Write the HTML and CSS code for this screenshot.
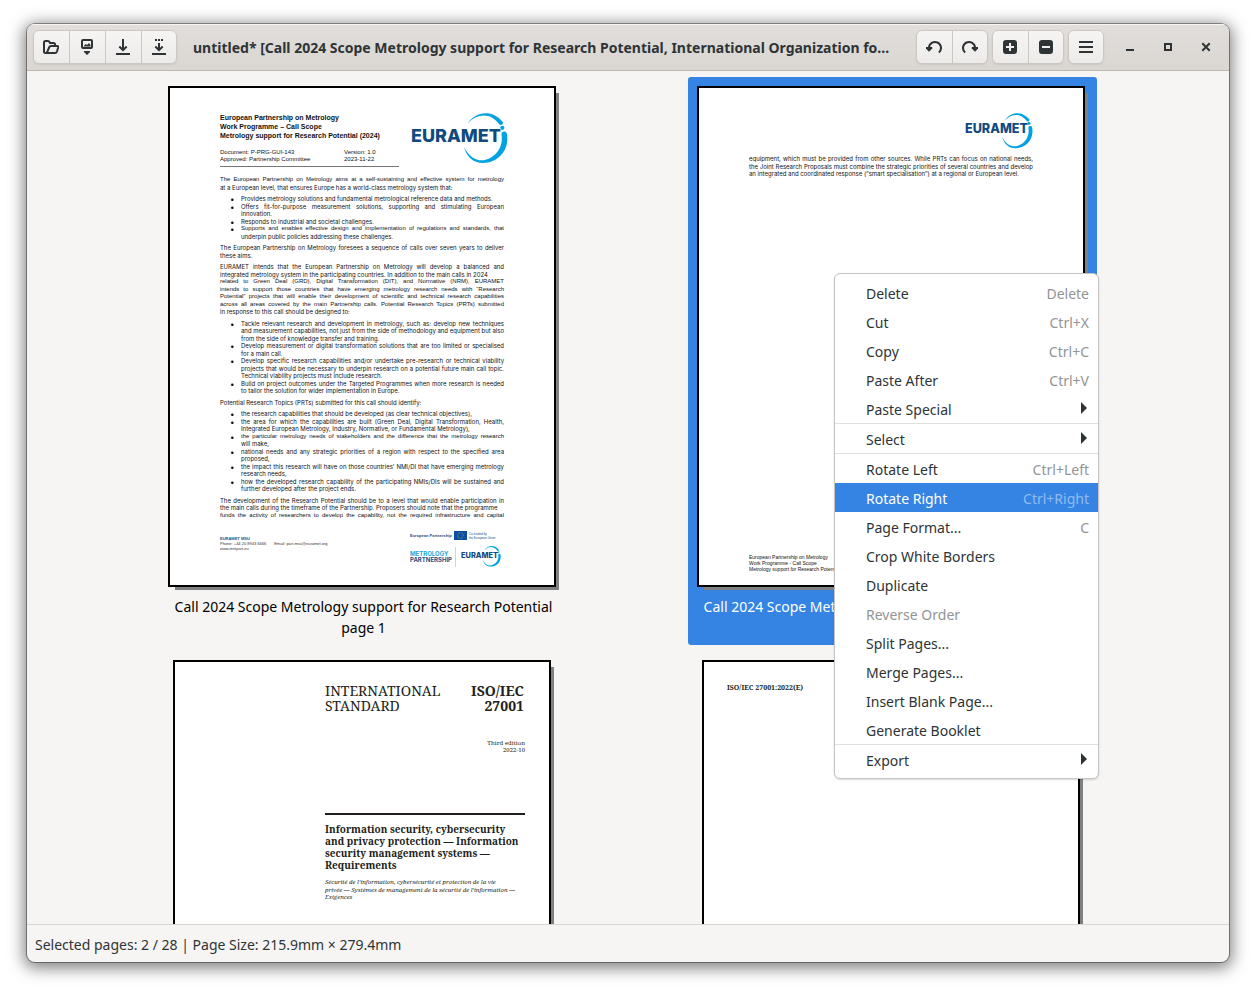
FILE: index.html
```html
<!DOCTYPE html>
<html lang="en">
<head>
<meta charset="utf-8">
<title>PDF Arranger</title>
<link rel="stylesheet" href="styles.css">
</head>
<body>
<svg class="defs" aria-hidden="true">
  <symbol id="euramet" viewBox="0 0 97 51">
    <text class="logo-text" x="0" y="29">EURAMET</text>
    <path fill="#00a3e0" d="M56.7 10.7C64-1.500 81-4 91.300 8.500A2 2 0 0 1 88.200 11.300C80-.500 66 0 56.700 10.700ZM90.500 21.500C90 18 95 17.500 95.800 20.500C99 37 87 50 72 50C62 50 55.500 43.500 53 34C60 48 71 50 80 44.500C88 39.500 92 31 90.500 21.500Z"/>
    <circle cx="91.300" cy="14.800" r="2.100" fill="#00a3e0"/>
  </symbol>
</svg>
<div class="window">
  <header class="titlebar">
    <div class="group">
      <button class="tool" aria-label="Open"><svg viewBox="0 0 16 16"><path class="line" d="M3.500 14H2.500Q1 14 1 12.500V3.500Q1 2 2.500 2H5Q6 2 6.500 3L7 4H10.500Q12 4 12 5.500V6M3.800 14L6.300 8Q6.800 7 8 7H14Q15.500 7 15.200 8.200L14 12.500Q13.500 14 12 14Z"/></svg></button>
      <button class="tool" aria-label="Import"><svg viewBox="0 0 16 16"><rect class="line" x="3" y="1" width="10" height="8" rx="1"/><path d="M4.500 7.500L6.500 5L8 6L10 4L11.500 6V7.500ZM5 12H11V13L8 16L5 13Z"/></svg></button>
      <button class="tool" aria-label="Save"><svg viewBox="0 0 16 16"><path class="line" d="M8 0V11M4.300 7.500L8 11.200L11.700 7.500M1 15H15"/></svg></button>
      <button class="tool" aria-label="Save as"><svg viewBox="0 0 16 16"><path class="line" d="M8 4V11M4.300 7.500L8 11.200L11.700 7.500M1 15H15M4 1H6M7 1H9M10 1H12"/></svg></button>
    </div>
    <h1 class="title">untitled* [Call 2024 Scope Metrology support for Research Potential, International Organization fo…</h1>
    <div class="group">
      <button class="tool" aria-label="Rotate left"><svg viewBox="0 0 16 16"><path class="line" d="M3 9A6 6 0 1 1 12.900 13.500"/><path d="M0 8H6.200V9.500L3 12.700L0 9.500Z"/></svg></button>
      <button class="tool" aria-label="Rotate right"><svg viewBox="0 0 16 16"><path class="line" d="M13 9A6 6 0 1 0 3.100 13.500"/><path d="M16 8H9.800V9.500L13 12.700L16 9.500Z"/></svg></button>
    </div>
    <div class="group">
      <button class="tool" aria-label="Zoom in"><svg viewBox="0 0 16 16"><path fill-rule="evenodd" d="M4 1H12Q15 1 15 4V12Q15 15 12 15H4Q1 15 1 12V4Q1 1 4 1ZM7 4V7H4V9H7V12H9V9H12V7H9V4Z"/></svg></button>
      <button class="tool" aria-label="Zoom out"><svg viewBox="0 0 16 16"><path fill-rule="evenodd" d="M4 1H12Q15 1 15 4V12Q15 15 12 15H4Q1 15 1 12V4Q1 1 4 1ZM4 7V9H12V7Z"/></svg></button>
    </div>
    <div class="group">
      <button class="tool" aria-label="Menu"><svg viewBox="0 0 16 16"><path d="M1 2H15V4H1ZM1 7H15V9H1ZM1 12H15V14H1Z"/></svg></button>
    </div>
    <div class="controls">
      <button class="control" aria-label="Minimize"><svg viewBox="0 0 16 16"><path d="M4 10H12V12H4Z"/></svg></button>
      <button class="control" aria-label="Maximize"><svg viewBox="0 0 16 16"><rect class="line" x="5" y="5" width="6" height="6"/></svg></button>
      <button class="control" aria-label="Close"><svg viewBox="0 0 16 16"><path class="line" d="M4.300 4.300L11.700 11.700M11.700 4.300L4.300 11.700"/></svg></button>
    </div>
  </header>

  <main class="canvas">
    <section class="item">
      <article class="page report">
        <div class="head">
          <div class="head-text">
            <h2>European Partnership on Metrology<br>Work Programme – Call Scope<br>Metrology support for Research Potential (2024)</h2>
            <div class="meta">
              <p>Document: P-PRG-GUI-143<br>Approved: Partnership Committee</p>
              <p>Version: 1.0<br>2023-11-22</p>
            </div>
          </div>
          <svg class="logo" role="img" aria-label="EURAMET"><use href="#euramet"/></svg>
        </div>
        <p><span class="tight">The European Partnership on Metrology aims at a self-sustaining and effective system for metrology</span> at a European level, that ensures Europe has a world-class metrology system that:</p>
        <ul>
          <li>Provides metrology solutions and fundamental metrological reference data and methods.</li>
          <li>Offers fit-for-purpose measurement solutions, supporting and stimulating European innovation.</li>
          <li>Responds to industrial and societal challenges.</li>
          <li><span class="tight">Supports and enables effective design and implementation of regulations and standards, that</span> underpin public policies addressing these challenges.</li>
        </ul>
        <p>The European Partnership on Metrology foresees a sequence of calls over seven years to deliver these aims.</p>
        <p>EURAMET intends that the European Partnership on Metrology will develop a balanced and integrated metrology system in the participating countries. In addition to the main calls in 2024 <span class="tight">related to Green Deal (GRD), Digital Transformation (DIT), and Normative (NRM), EURAMET</span> <span class="tight">intends to support those countries that have emerging metrology research needs with “Research</span> <span class="tight">Potential” projects that will enable their development of scientific and technical research capabilities</span> <span class="tight">across all areas covered by the main Partnership calls. Potential Research Topics (PRTs) submitted</span> in response to this call should be designed to:</p>
        <ul>
          <li>Tackle relevant research and development in metrology, such as: develop new techniques and measurement capabilities, not just from the side of methodology and equipment but also from the side of knowledge transfer and training.</li>
          <li>Develop measurement or digital transformation solutions that are too limited or specialised for a main call.</li>
          <li>Develop specific research capabilities and/or undertake pre-research or technical viability projects that would be necessary to underpin research on a potential future main call topic. Technical viability projects must include research.</li>
          <li>Build on project outcomes under the Targeted Programmes when more research is needed to tailor the solution for wider implementation in Europe.</li>
        </ul>
        <p>Potential Research Topics (PRTs) submitted for this call should identify:</p>
        <ul>
          <li>the research capabilities that should be developed (as clear technical objectives),</li>
          <li>the area for which the capabilities are built (Green Deal, Digital Transformation, Health, Integrated European Metrology, Industry, Normative, or Fundamental Metrology),</li>
          <li><span class="tight">the particular metrology needs of stakeholders and the difference that the metrology research</span> will make,</li>
          <li>national needs and any strategic priorities of a region with respect to the specified area proposed,</li>
          <li>the impact this research will have on those countries’ NMI/DI that have emerging metrology research needs,</li>
          <li>how the developed research capability of the participating NMIs/DIs will be sustained and further developed after the project ends.</li>
        </ul>
        <p>The development of the Research Potential should be to a level that would enable participation in the main calls during the timeframe of the Partnership. Proposers should note that the programme <span class="tight">funds the activity of researchers to develop the capability, not the required infrastructure and capital</span></p>
        <footer class="foot">
          <div class="contact">
            <b>EURAMET MSU</b>
            <div class="contact-row"><span>Phone: +44 20 8943 6666</span><span>Email: part.msu@euramet.org</span></div>
            <span>www.metpart.eu</span>
          </div>
          <div class="brands">
            <div class="funding">
              <b>European Partnership</b>
              <svg class="flag" viewBox="0 0 13 9"><path fill="#0b4ea2" d="M0 0H13V9H0Z"/><circle cx="6.500" cy="4.500" r="2.800" fill="none" stroke="#b9b95a" stroke-width=".8" stroke-dasharray=".7 .76"/></svg>
              <span>Co-funded by<br>the European Union</span>
            </div>
            <div class="partner">
              <b><i>METROLOGY</i><br>PARTNERSHIP</b>
              <svg class="logo" role="img" aria-label="EURAMET"><use href="#euramet"/></svg>
            </div>
          </div>
        </footer>
      </article>
      <p class="caption">Call 2024 Scope Metrology support for Research Potential<br>page 1</p>
    </section>

    <section class="item selected">
      <article class="page report second">
        <svg class="logo" role="img" aria-label="EURAMET"><use href="#euramet"/></svg>
        <p>equipment, which must be provided from other sources. While PRTs can focus on national needs, the Joint Research Proposals must combine the strategic priorities of several countries and develop an integrated and coordinated response (“smart specialisation”) at a regional or European level.</p>
        <footer class="note">European Partnership on Metrology<br>Work Programme - Call Scope<br>Metrology support for Research Potential</footer>
      </article>
      <p class="caption">Call 2024 Scope Metrology support for Research Potential<br>page 2</p>
      <div class="menu" role="menu">
        <button role="menuitem"><span>Delete</span><kbd>Delete</kbd></button>
        <button role="menuitem"><span>Cut</span><kbd>Ctrl+X</kbd></button>
        <button role="menuitem"><span>Copy</span><kbd>Ctrl+C</kbd></button>
        <button role="menuitem"><span>Paste After</span><kbd>Ctrl+V</kbd></button>
        <button role="menuitem" class="sub"><span>Paste Special</span></button>
        <hr>
        <button role="menuitem" class="sub"><span>Select</span></button>
        <hr>
        <button role="menuitem"><span>Rotate Left</span><kbd>Ctrl+Left</kbd></button>
        <button role="menuitem" class="active"><span>Rotate Right</span><kbd>Ctrl+Right</kbd></button>
        <button role="menuitem"><span>Page Format...</span><kbd>C</kbd></button>
        <button role="menuitem"><span>Crop White Borders</span></button>
        <button role="menuitem"><span>Duplicate</span></button>
        <button role="menuitem" disabled><span>Reverse Order</span></button>
        <button role="menuitem"><span>Split Pages...</span></button>
        <button role="menuitem"><span>Merge Pages...</span></button>
        <button role="menuitem"><span>Insert Blank Page...</span></button>
        <button role="menuitem"><span>Generate Booklet</span></button>
        <hr>
        <button role="menuitem" class="sub"><span>Export</span></button>
      </div>
    </section>

    <section class="item">
      <article class="page standard">
        <div class="iso-head">
          <span>INTERNATIONAL<br>STANDARD</span>
          <b>ISO/IEC<br>27001</b>
        </div>
        <p class="edition">Third edition<br>2022-10</p>
        <h2>Information security, cybersecurity<br>and privacy protection — Information<br>security management systems —<br>Requirements</h2>
        <p class="french">Sécurité de l’information, cybersécurité et protection de la vie<br>privée — Systèmes de management de la sécurité de l’information —<br>Exigences</p>
      </article>
    </section>

    <section class="item">
      <article class="page standard inner">
        <b>ISO/IEC 27001:2022(E)</b>
      </article>
    </section>
  </main>

  <footer class="status">Selected pages: 2 / 28 | Page Size: 215.9mm × 279.4mm</footer>
</div>
</body>
</html>
```
FILE: styles.css
```css
* { box-sizing: border-box; }

body {
  margin: 0;
  height: 100vh;
  padding: 24px 24px 28px 27px;
  background: #fff;
  color: #2e3436;
  font: 14px/21px "Noto Sans", "Open Sans", sans-serif;
  overflow: hidden;
}

h1, h2, p, ul { margin: 0; padding: 0; font-size: inherit; }
button { font: inherit; color: inherit; border: 0; padding: 0; background: none; }
svg { display: block; }
.defs { position: absolute; width: 0; height: 0; }
.logo-text { font: 800 18px Inter, sans-serif; fill: #114a7e; }

.window {
  height: 100%;
  display: flex;
  flex-direction: column;
  background: #f6f5f4;
  border-radius: 8px;
  box-shadow: 0 0 0 1px rgba(0, 0, 0, .36), 0 3px 16px 3px rgba(0, 0, 0, .5);
  overflow: hidden;
}

.titlebar {
  display: flex;
  align-items: center;
  gap: 4px;
  height: 47px;
  padding: 0 5px 0 6px;
  border-bottom: 1px solid #bfb8b1;
  background: linear-gradient(#e1dedb, #dad6d2);
  box-shadow: inset 0 1px #f7f6f5;
}
.title {
  flex: 1;
  min-width: 0;
  padding: 0 8px 0 12px;
  font-weight: 700;
  white-space: nowrap;
  overflow: hidden;
  text-overflow: ellipsis;
}
.group {
  display: flex;
  border: 1px solid #cdc7c2;
  border-radius: 6px;
  background: linear-gradient(#f6f5f4, #edebe9);
  box-shadow: 0 1px 2px rgba(0, 0, 0, .08);
}
.tool { display: flex; align-items: center; justify-content: center; width: 35px; height: 32px; padding-right: 1px; }
.tool + .tool { width: 36px; border-left: 1px solid #cdc7c2; }
.group .tool:last-child { width: 35px; padding-right: 0; }
.group .tool:only-child { width: 34px; }
.tool svg, .control svg { width: 16px; height: 16px; fill: #2e3436; }
.titlebar .line { fill: none; stroke: #2e3436; stroke-width: 2; }
.controls { display: flex; gap: 14px; padding: 0 6px 0 10px; }
.control { width: 24px; height: 24px; display: flex; align-items: center; justify-content: center; }

.canvas {
  flex: 1;
  min-height: 0;
  overflow: hidden;
  display: grid;
  grid-template-columns: 409px 409px;
  align-content: start;
  justify-content: center;
  gap: 6px 120px;
  padding-top: 6px;
}
.item { position: relative; display: flex; flex-direction: column; align-items: center; padding: 9px 0 7px; border-radius: 3px; }
.selected { background: #3584e4; z-index: 1; }
.caption { color: #000; text-align: center; padding-top: 9px; }
.selected .caption { color: #fff; }

.page {
  display: flex;
  flex-direction: column;
  width: 388px;
  height: 501px;
  margin-right: 3px;
  border: 2px solid #000;
  background: #fff;
  color: #111;
  box-shadow: 5px 5px 0 -2px #808080;
}

.report { padding: 25px 50px 18px; font: 6px/1.25 Inter, "Liberation Sans", sans-serif; }
.report p { text-align: justify; margin-bottom: 4px; }
.tight { display: block; font-family: "Liberation Sans", Arial, sans-serif; text-align-last: justify; }
.report ul { list-style: none; padding-left: 21px; margin-bottom: 4px; }
.report li { position: relative; text-align: justify; }
.report li::before { content: "•"; position: absolute; left: -11px; font-size: 8px; line-height: 8px; }
.head { display: flex; justify-content: space-between; margin-bottom: 9px; }
.head-text { width: 179px; border-bottom: 1px solid #777; font-family: "Liberation Sans", Arial, sans-serif; }
.head h2 { font-size: 7px; line-height: 9px; white-space: nowrap; }
.meta { display: grid; grid-template-columns: 124px 1fr; line-height: 7px; padding-top: 9px; }
.meta p { margin: 0 0 3px; }
.head .logo { width: 97px; height: 51px; margin-right: -4px; }

.foot { display: flex; justify-content: space-between; margin-top: auto; font: 4px/5px "Liberation Sans", Arial, sans-serif; color: #333; }
.contact { padding-top: 5px; }
.contact b { display: block; color: #1c4f86; }
.contact-row { display: flex; gap: 8px; }
.brands { width: 94px; color: #1c4f86; }
.funding { display: flex; align-items: center; gap: 2px; white-space: nowrap; }
.funding span { font-size: 3px; line-height: 4px; }
.flag { width: 13px; height: 9px; flex: none; }
.partner { display: flex; align-items: center; gap: 5px; padding-top: 6px; }
.partner b { width: 46px; border-right: 1px solid #b9dcea; font: 700 6px/6px Inter, sans-serif; padding: 4px 0; }
.partner i { font-style: normal; color: #1da7d8; }
.partner .logo { width: 40px; height: 21px; }

.second .logo { width: 68px; height: 36px; align-self: flex-end; margin: 0 0 6px; }
.second { padding-bottom: 13px; }
.note { margin-top: auto; font: 5px/6px "Liberation Sans", Arial, sans-serif; white-space: nowrap; }

.standard { width: 378px; padding: 21px 24px 0 150px; font-family: "Noto Serif", "Droid Serif", "DejaVu Serif Condensed", serif; color: #231f20; }
.iso-head { display: flex; justify-content: space-between; font-size: 14px; line-height: 15px; padding-right: 1px; }
.iso-head b { text-align: right; }
.edition { text-align: right; font-size: 6px; line-height: 7px; padding: 27px 0 59px; }
.standard h2 { border-top: 2px solid #231f20; padding: 8px 0 8px; font-size: 10px; line-height: 12px; white-space: nowrap; }
.french { font-size: 6px; line-height: 1.25; font-style: italic; white-space: nowrap; }
.inner { padding: 21px 23px; font-size: 7px; line-height: 10px; }

.menu {
  position: absolute;
  left: 146px;
  top: 196px;
  width: 265px;
  padding: 4px 0;
  border: 1px solid #c6c4c2;
  border-radius: 6px;
  background: #fff;
  box-shadow: 0 1px 2px rgba(0, 0, 0, .15);
}
.menu button { display: flex; align-items: center; justify-content: space-between; width: 100%; height: 29px; padding: 1px 9px 0 31px; }
.menu kbd { font: inherit; color: #929495; }
.menu hr { margin: 0; border: 0; border-top: 1px solid #dfdfde; }
.menu .active { background: #3584e4; color: #fff; }
.menu .active kbd { color: #8fbcf0; }
.menu button:disabled { color: #929495; }
.menu .sub::after { content: ""; margin: 0 2px 3px 0; border: solid transparent; border-width: 6px 0 6px 6px; border-left-color: #2e3436; }

.status { border-top: 1px solid #d9d7d5; padding: 9px 8px 7px; }
```
